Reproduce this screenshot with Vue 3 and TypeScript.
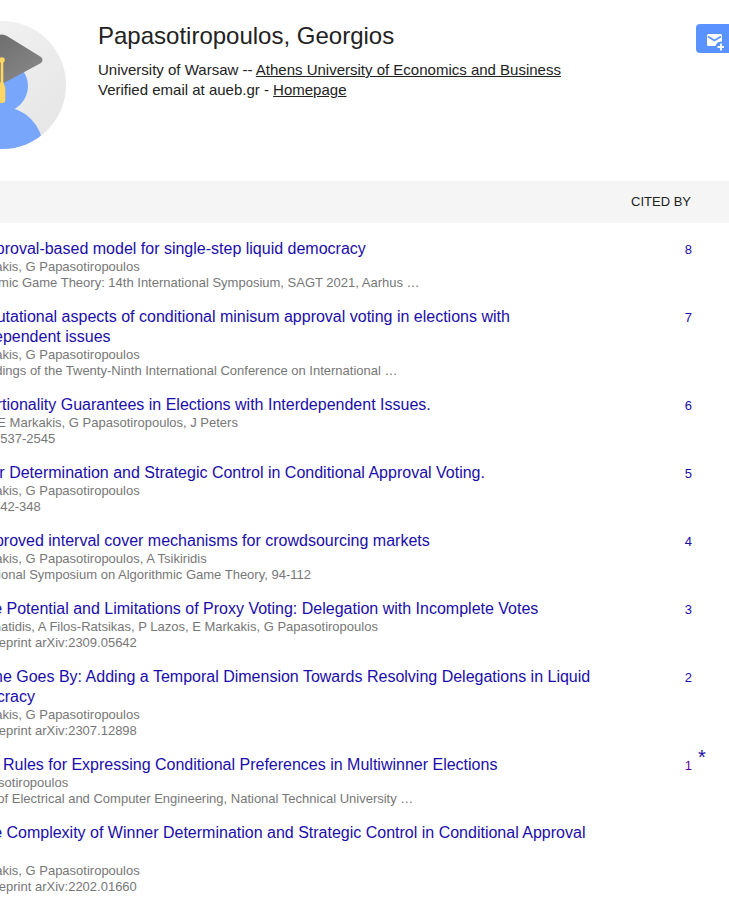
<script setup lang="ts">
interface Row { t: string; a: string; v: string; c: number; star?: boolean }
const rows: Row[] = [
  { t: 'An approval-based model for single-step liquid democracy', a: 'E Markakis, G Papasotiropoulos', v: 'Algorithmic Game Theory: 14th International Symposium, SAGT 2021, Aarhus …', c: 8 },
  { t: 'Computational aspects of conditional minisum approval voting in elections with interdependent issues', a: 'E Markakis, G Papasotiropoulos', v: 'Proceedings of the Twenty-Ninth International Conference on International …', c: 7 },
  { t: 'Proportionality Guarantees in Elections with Interdependent Issues.', a: 'M Brill, E Markakis, G Papasotiropoulos, J Peters', v: 'IJCAI, 2537-2545', c: 6 },
  { t: 'Winner Determination and Strategic Control in Conditional Approval Voting.', a: 'E Markakis, G Papasotiropoulos', v: 'IJCAI, 342-348', c: 5 },
  { t: 'An improved interval cover mechanisms for crowdsourcing markets', a: 'E Markakis, G Papasotiropoulos, A Tsikiridis', v: 'International Symposium on Algorithmic Game Theory, 94-112', c: 4 },
  { t: 'On the Potential and Limitations of Proxy Voting: Delegation with Incomplete Votes', a: 'G Amanatidis, A Filos-Ratsikas, P Lazos, E Markakis, G Papasotiropoulos', v: 'arXiv preprint arXiv:2309.05642', c: 3 },
  { t: 'As Time Goes By: Adding a Temporal Dimension Towards Resolving Delegations in Liquid Democracy', a: 'E Markakis, G Papasotiropoulos', v: 'arXiv preprint arXiv:2307.12898', c: 2 },
  { t: 'Voting Rules for Expressing Conditional Preferences in Multiwinner Elections', a: 'G Papasotiropoulos', v: 'School of Electrical and Computer Engineering, National Technical University …', c: 1, star: true },
  { t: 'On the Complexity of Winner Determination and Strategic Control in Conditional Approval Voting', a: 'E Markakis, G Papasotiropoulos', v: 'arXiv preprint arXiv:2202.01660', c: 0 },
]
</script>

<template>
  <div class="page">
    <div class="sheet">
      <header class="head">
        <svg class="avatar" viewBox="0 0 128 128">
          <defs>
            <clipPath id="circ"><circle cx="64" cy="64" r="64" /></clipPath>
            <linearGradient id="bg" x1="0" y1="0" x2="1" y2="1"><stop offset="0" stop-color="#f5f5f5" /><stop offset="1" stop-color="#e4e4e4" /></linearGradient>
            <linearGradient id="cap" x1="0.4" y1="0.2" x2="1" y2="0.7"><stop offset="0" stop-color="#707070" /><stop offset="1" stop-color="#868686" /></linearGradient>
          </defs>
          <g clip-path="url(#circ)">
            <rect width="128" height="128" fill="url(#bg)" />
            <circle cx="64" cy="65" r="26" fill="#78a6fb" />
            <circle cx="64" cy="127" r="41" fill="#78a6fb" />
            <path d="M59 15 Q64 12 69 15 L103 36 Q106 39 103 42 L64 63 L24 42 Q22 39 24 36 Z" fill="url(#cap)" />
            <rect x="62.7" y="39" width="2.6" height="24" fill="#fdd663" />
            <circle cx="64" cy="39" r="2.8" fill="#fdd663" />
            <path d="M62.7 61 h2.6 l2 6 v12 q0 3 -3 3 h-1.6 q-3 0 -3 -3 v-12 z" fill="#fdd663" />
          </g>
        </svg>
        <div class="info">
          <h1 class="name">Papasotiropoulos, Georgios</h1>
          <div class="line">University of Warsaw -- <a class="ul">Athens University of Economics and Business</a></div>
          <div class="line">Verified email at aueb.gr - <a class="ul">Homepage</a></div>
        </div>
        <button class="follow" aria-label="Follow">
          <svg width="20" height="20" viewBox="0 0 20 20">
            <rect x="3" y="3" width="15" height="12" rx="1.5" fill="#fff" />
            <path d="M4 5.5l6.5 4 6.5-4" fill="none" stroke="#5a93ff" stroke-width="1.5" />
            <circle cx="17" cy="16" r="5.5" fill="#5a93ff" />
            <path d="M16.1 12.5h1.8v2.6h2.6v1.8h-2.6v2.6h-1.8v-2.6h-2.6v-1.8h2.6z" fill="#fff" />
          </svg>
        </button>
      </header>

      <div class="thead"><span class="tcited">CITED BY</span></div>

      <div v-for="r in rows" :key="r.t" class="row">
        <div class="main">
          <a class="title">{{ r.t }}</a>
          <div class="meta">{{ r.a }}</div>
          <div class="meta">{{ r.v }}</div>
        </div>
        <div class="cites">
          <a v-if="r.c" class="num" :class="{ visited: r.star }">{{ r.c }}</a>
          <span v-if="r.star" class="star">*</span>
        </div>
      </div>
    </div>
  </div>
</template>

<style>
html, body { margin: 0; overflow: hidden; background: #fff; }
</style>

<style scoped>
.page { width: 729px; height: 901px; overflow: hidden; font-family: "Liberation Sans", Arial, sans-serif; color: #222; }
.sheet { width: 900px; margin-left: -62px; }
.head { display: flex; height: 181px; box-sizing: border-box; padding-top: 21px; }
.avatar { width: 128px; height: 128px; flex: none; }
.info { margin-left: 32px; width: 598px; flex: none; }
.name { font-size: 24px; font-weight: 400; line-height: 30px; margin: 0 0 9px; }
.line { font-size: 15px; line-height: 20px; }
.ul { text-decoration: underline; color: #222; }
.follow { width: 60px; height: 29px; margin-top: 3px; flex: none; background: #5a93ff; border: 0; border-radius: 4px; padding: 5px 0 0 8px; box-sizing: border-box; text-align: left; line-height: 0; }
.thead { height: 42px; background: #f5f5f5; display: flex; align-items: center; padding: 0 0 2px 694px; box-sizing: border-box; }
.tcited { font-size: 13px; width: 60px; text-align: right; white-space: nowrap; margin-left: -1px; }
.row { display: flex; padding: 16px 0 0; }
.main { width: 684px; box-sizing: border-box; padding: 0 30px 0 16px; }
.title { display: block; font-size: 16px; line-height: 20px; color: #1a0dab; }
.meta { font-size: 13px; line-height: 16px; color: #777; }
.cites { position: relative; width: 70px; text-align: right; font-size: 13px; line-height: 20px; padding-top: 1px; box-sizing: content-box; }
.num { color: #1a0dab; }
.num.visited { color: #660099; }
.star { position: absolute; left: 76px; top: -8px; font-size: 20px; color: #1a0dab; }
</style>
